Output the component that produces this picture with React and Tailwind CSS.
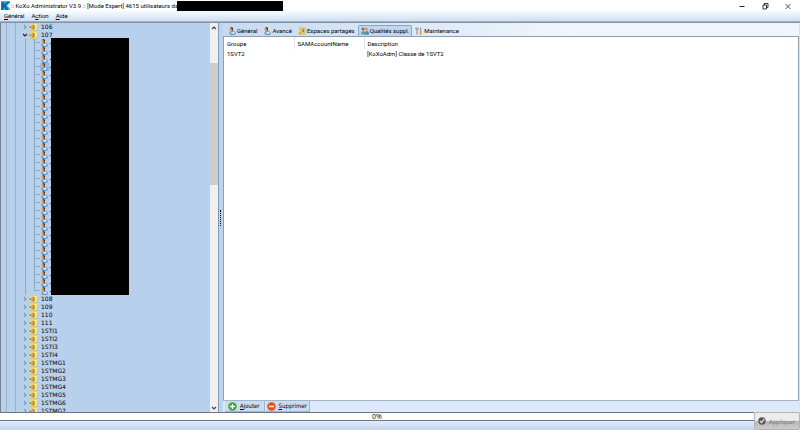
const TABS = [
  { label: 'Général', icon: 'user' },
  { label: 'Avancé', icon: 'user' },
  { label: 'Espaces partagés', icon: 'share' },
  { label: 'Qualités suppl.', icon: 'group', active: true },
  { label: 'Maintenance', icon: 'tools' },
];

const CLOSED_GROUPS = [
  '108', '109', '110', '111', '1STI1', '1STI2', '1STI3', '1STI4',
  '1STMG1', '1STMG2', '1STMG3', '1STMG4', '1STMG5', '1STMG6', '1STMG7',
];

const MEMBER_COUNT = 32;
const SELECTED_MEMBER = 3;

const KoxoLogo = () => (
  <svg className="w-[9px] h-[9px] shrink-0" viewBox="0 0 8 8">
    <path d="M0 0H8V2L5.5 4L8 6.5V8H0Z" fill="#4bb4e6" />
    <path d="M0.3 1H3L2.6 3L5.4 0.6H8L4.4 3.8L6.8 8H4.2L2.5 5L2 8H0Z" fill="#0868a8" />
  </svg>
);

const UserIcon = () => (
  <svg className="w-2 h-2 shrink-0" viewBox="0 0 8 8">
    <ellipse cx="4.6" cy="6" rx="3.1" ry="2" fill="#5f83ab" />
    <ellipse cx="4.8" cy="5.7" rx="2.4" ry="1.5" fill="#a6cbee" />
    <path d="M3.6 7L5.2 4.8L6.2 5.8Z" fill="#f6fbff" />
    <ellipse cx="3.2" cy="2.3" rx="1.7" ry="2" fill="#dc9659" />
    <path d="M2.4 0.3C4.2 -0.4 5.4 0.8 5 2.4L4.6 4.2L3.9 4.4L3.9 2Z" fill="#4a3b35" />
  </svg>
);

const FolderIcon = () => (
  <svg className="w-[9px] h-2 shrink-0" viewBox="0 0 9 8">
    <path d="M1.4 1.3L5 0.5L5.6 1H9V7L1.4 7.6Z" fill="#f5d35c" />
    <path d="M5.6 1H9V7L5.6 7.3Z" fill="#fae68f" />
    <path d="M8.7 1.4V6.9L1.6 7.5" fill="none" stroke="#d0a93f" strokeWidth="0.6" />
    <path d="M0 4.2H3M2.8 2.8H5.2V5.6H2.8M3.4 4.2H5" fill="none" stroke="#8a7030" strokeWidth="0.8" />
  </svg>
);

const ShareIcon = () => (
  <svg className="w-2 h-2 shrink-0" viewBox="0 0 8 8">
    <path d="M1.4 0.8L4.2 0.4L5 1H8V7L2.4 7.4Z" fill="#f3d257" stroke="#c4a037" strokeWidth="0.4" />
    <path d="M4 2.6H5.6V5.4M3.6 4.2H5.4" fill="none" stroke="#6d7d73" strokeWidth="0.9" />
    <path d="M0 7C0.4 5 2 4.6 3.4 5.4L4 7.6H0.6Z" fill="#e1a668" />
  </svg>
);

const GroupIcon = () => (
  <svg className="w-2 h-2 shrink-0" viewBox="0 0 8 8">
    <circle cx="2" cy="2" r="1.5" fill="#7b6852" />
    <circle cx="5.4" cy="1.9" r="1.5" fill="#c79b52" />
    <path d="M0 6.4C0.2 4 3 3.2 4.2 5L4 7.4H0.6Z" fill="#6f9b86" />
    <path d="M3.6 7.8C3.6 4.2 6.8 2.6 8 5.6L7.8 7.8Z" fill="#5489b9" />
    <circle cx="3.9" cy="3.8" r="1" fill="#e5bb87" />
  </svg>
);

const ToolsIcon = () => (
  <svg className="w-2 h-2 shrink-0" viewBox="0 0 8 8">
    <path d="M1 0.4V2L2 2.8L3 2V0.4M2 2.8V7.8" fill="none" stroke="#8d9299" strokeWidth="1.1" />
    <path d="M5.6 0.6V3.8" stroke="#8a9098" strokeWidth="1" />
    <path d="M5.6 3.4V7.8" stroke="#e3a43c" strokeWidth="1.9" />
  </svg>
);

const TAB_ICONS = { user: UserIcon, share: ShareIcon, group: GroupIcon, tools: ToolsIcon };

const Chevron = ({ open }) => (
  <svg className="w-2 h-2 shrink-0" viewBox="0 0 8 8">
    {open ? (
      <path d="M2 3L4 5L6 3" fill="none" stroke="#222" strokeWidth="1.1" />
    ) : (
      <path d="M3.2 2L5 4L3.2 6" fill="none" stroke="#5c6f84" strokeWidth="0.9" />
    )}
  </svg>
);

const GroupRow = ({ name, open }) => (
  <li className="flex items-center h-2 pl-5 shrink-0">
    <Chevron open={open} />
    <FolderIcon />
    <span className="pl-[3px]">{name}</span>
  </li>
);

const Members = () => (
  <li className="flex shrink-0">
    <ul className="w-[49px] pl-6">
      {Array.from({ length: MEMBER_COUNT }, (_, i) => (
        <li key={i} className="flex h-2 border-l border-[#8fa9c4]">
          <span className="w-2" />
          <span className={`border-l border-[#8fa9c4] ${i === MEMBER_COUNT - 1 ? 'h-1' : 'h-2'}`} />
          <span className="w-[5px] h-1 border-b border-[#8fa9c4]" />
          <span className={`flex grow ${i === SELECTED_MEMBER ? 'bg-[#8dbfee]' : ''}`}>
            <UserIcon />
          </span>
        </li>
      ))}
    </ul>
    <div className="w-px flex flex-col">
      {Array.from({ length: MEMBER_COUNT }, (_, i) => (
        <span key={i} className="h-2 pt-1">
          <span className="block w-px h-px bg-[#33475c]" />
        </span>
      ))}
    </div>
    <div className="w-[78px] -mt-px bg-black" />
  </li>
);

const Tree = () => (
  <nav className="relative grow overflow-hidden bg-[#b7d1ec] border-l border-[#75828f]">
    <div className="absolute inset-y-0 left-[5px] w-[10px] border-x border-[#98b1cc]" />
    <ul className="flex flex-col text-[6px] leading-[8px] font-['DejaVu_Sans',sans-serif]">
      <GroupRow name="106" />
      <GroupRow name="107" open />
      <Members />
      {CLOSED_GROUPS.map((name) => (
        <GroupRow key={name} name={name} />
      ))}
    </ul>
  </nav>
);

const ScrollBar = () => (
  <div className="flex flex-col w-2 shrink-0 bg-[#f0f0f0]">
    <svg className="w-2 h-2 my-px" viewBox="0 0 8 8">
      <path d="M2 5L4 3L6 5" fill="none" stroke="#444" strokeWidth="1.2" />
    </svg>
    <div className="grow flex flex-col">
      <div className="basis-[8%] shrink-0" />
      <div className="basis-[33%] bg-[#cdcdcd]" />
    </div>
    <svg className="w-2 h-2" viewBox="0 0 8 8">
      <path d="M2 3L4 5L6 3" fill="none" stroke="#444" strokeWidth="1.2" />
    </svg>
  </div>
);

const Splitter = () => (
  <div className="flex items-center justify-center w-[5px] shrink-0 bg-[#bdd4ee] border-l border-[#8199b5]">
    <div className="h-4 pr-px border-l border-dotted border-black" />
  </div>
);

const TitleBar = () => (
  <header className="flex items-center h-[11px] shrink-0 bg-white">
    <span className="w-px" />
    <KoxoLogo />
    <h1 className="pl-px text-[6px] leading-[10px] whitespace-nowrap">
      :: KoXo Administrator V3.9 :: [Mode Expert] 4615 utilisateurs da
    </h1>
    <div className="w-[106px] h-[10px] -ml-px bg-black" />
    <div className="flex ml-auto gap-[15px] pr-2">
      <button aria-label="Réduire">
        <svg className="w-2 h-2" viewBox="0 0 8 8"><path d="M1.5 4.5H6.5" stroke="#222" /></svg>
      </button>
      <button aria-label="Restaurer">
        <svg className="w-2 h-2" viewBox="0 0 8 8">
          <path d="M2 3H5.5V7H2ZM3.2 3V1.5H7V5.5H5.5" fill="none" stroke="#222" strokeWidth="0.9" />
        </svg>
      </button>
      <button aria-label="Fermer">
        <svg className="w-2 h-2" viewBox="0 0 8 8">
          <path d="M1.5 2L6.5 7M6.5 2L1.5 7" stroke="#222" strokeWidth="0.8" />
        </svg>
      </button>
    </div>
  </header>
);

const MenuBar = () => (
  <nav className="flex items-center gap-[7px] h-[11px] pl-1 shrink-0 text-[6px] leading-[10px] bg-linear-to-b from-[#f8fbfe] to-[#cfdff2] border-b border-[#a5b2c1]">
    <button><u>G</u>énéral</button>
    <button>A<u>c</u>tion</button>
    <button><u>A</u>ide</button>
  </nav>
);

const TabBar = () => (
  <div role="tablist" className="flex h-[13px] pt-[2px] pl-[2px] shrink-0 text-[6px] leading-[10px] bg-linear-to-r from-[#c6daf2] to-[#eff6fd] to-60%">
    {TABS.map(({ label, icon, active }) => {
      const Icon = TAB_ICONS[icon];
      return (
        <button
          key={label}
          role="tab"
          aria-selected={Boolean(active)}
          className={`flex items-center gap-px px-[2px] border border-b-0 rounded-t-xs whitespace-nowrap ${
            active ? 'border-[#87a5cc] bg-[#c1d7f1]' : 'border-transparent'
          }`}
        >
          <Icon />
          {label}
        </button>
      );
    })}
  </div>
);

const GroupTable = () => (
  <div className="grow bg-white border border-[#8d9fb5] border-b-[#a3b5ca]">
    <table className="w-full table-fixed text-[6px] leading-[10px] text-left">
      <thead>
        <tr className="h-3">
          <th className="w-[70px] pl-[3px] pt-[2px] font-normal border-r border-[#e4e4e4]">Groupe</th>
          <th className="w-[70px] pl-[3px] pt-[2px] font-normal border-r border-[#e4e4e4]">SAMAccountName</th>
          <th className="pl-[3px] pt-[2px] font-normal">Description</th>
        </tr>
      </thead>
      <tbody>
        <tr>
          <td className="pl-[3px]">1SVT2</td>
          <td />
          <td className="pl-[3px]">[KoXoAdm] Classe de 1SVT2</td>
        </tr>
      </tbody>
    </table>
  </div>
);

const RoundIcon = ({ color, plus }) => (
  <svg className="w-[9px] h-[9px] shrink-0" viewBox="0 0 9 9">
    <circle cx="4.5" cy="4.5" r="4.2" fill={color} />
    <path d={plus ? 'M2 4.5H7M4.5 2V7' : 'M2 4.5H7'} stroke="#fff" strokeWidth="1.4" />
  </svg>
);

const ActionBar = () => (
  <div className="flex h-[11px] shrink-0 pl-[2px] gap-px text-[6px] leading-[10px] bg-[#dbe9f9] font-['DejaVu_Sans_Condensed','DejaVu_Sans',sans-serif]">
    <button className="flex items-center gap-[3px] pl-[3px] pr-1 bg-[#c9dcf2] border-r border-b border-[#9fb6d1]">
      <RoundIcon color="#37a82f" plus />
      <span><u>A</u>jouter</span>
    </button>
    <button className="flex items-center gap-[3px] pl-px pr-[2px] bg-[#c9dcf2] border-r border-b border-[#9fb6d1]">
      <RoundIcon color="#e8501c" />
      <span><u>S</u>upprimer</span>
    </button>
  </div>
);

const Footer = () => (
  <footer className="flex h-[18px] shrink-0">
    <div className="grow flex flex-col">
      <div role="progressbar" aria-valuenow={0} className="h-[9px] bg-white border-y border-[#6b7583] text-center text-[7px] leading-[8px] font-['Open_Sans',sans-serif]">
        0%
      </div>
      <div className="grow bg-linear-to-b from-[#e3edf9] to-[#bfd3ee]" />
    </div>
    <button
      disabled
      className="flex items-center gap-[3px] w-[46px] pl-[3px] text-[6px] text-[#7a7a7a] border border-[#b4b4b4] rounded-xs bg-linear-to-b from-[#ececec] from-50% via-[#b5b5b5] via-50% to-[#cccccc] font-['DejaVu_Sans_Condensed','DejaVu_Sans',sans-serif]"
    >
      <svg className="w-2 h-2 shrink-0" viewBox="0 0 8 8">
        <circle cx="4" cy="4" r="3.7" fill="#555" />
        <path d="M2 4L3.6 5.6L6.4 1.8" fill="none" stroke="#eee" strokeWidth="1.1" />
      </svg>
      Appliquer
    </button>
  </footer>
);

const App = () => (
  <div className="flex flex-col h-screen overflow-hidden bg-[#d5e5f7] text-black font-[Roboto,sans-serif]">
    <TitleBar />
    <MenuBar />
    <main className="grow min-h-0 flex border-t border-[#8290a0]">
      <div className="flex w-[218px] shrink-0">
        <Tree />
        <ScrollBar />
      </div>
      <Splitter />
      <section className="grow flex flex-col pr-px">
        <TabBar />
        <GroupTable />
        <ActionBar />
      </section>
    </main>
    <Footer />
  </div>
);

export default App;
